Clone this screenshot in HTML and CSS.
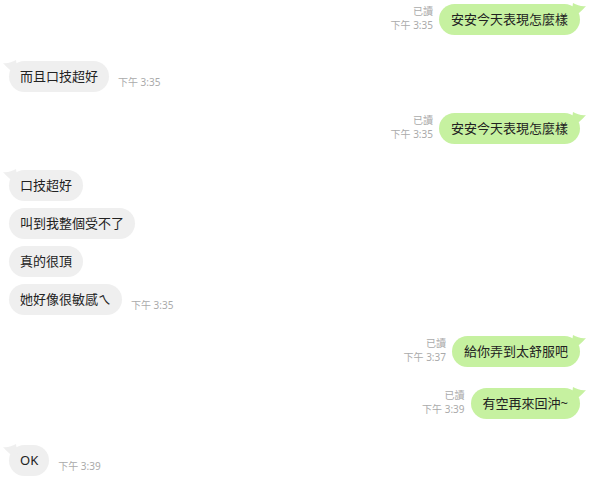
FILE: index.html
```html
<!DOCTYPE html>
<html lang="zh-Hant">
<head>
    <meta charset="UTF-8">
    <meta name="viewport" content="width=device-width, initial-scale=1.0">
    <title>Chat</title>
    <link rel="stylesheet" href="styles.css">
</head>
<body>
    <div class="chat">
        <div class="row out">
            <div class="meta"><span>已讀</span><span>下午 3:35</span></div>
            <div class="bubble">安安今天表現怎麼樣
                <svg class="tail" viewBox="0 0 20 16"><path d="M1,3 C5,4 10,2 14,0 L16,14 C10,12 5,8 1,3 Z"/></svg>
            </div>
        </div>

        <div class="row in">
            <div class="bubble">而且口技超好
                <svg class="tail" viewBox="0 0 20 16"><path d="M1,3 C5,4 10,2 14,0 L16,14 C10,12 5,8 1,3 Z"/></svg>
            </div>
            <div class="meta"><span>下午 3:35</span></div>
        </div>

        <div class="row out">
            <div class="meta"><span>已讀</span><span>下午 3:35</span></div>
            <div class="bubble">安安今天表現怎麼樣
                <svg class="tail" viewBox="0 0 20 16"><path d="M1,3 C5,4 10,2 14,0 L16,14 C10,12 5,8 1,3 Z"/></svg>
            </div>
        </div>

        <div class="row in">
            <div class="bubble">口技超好
                <svg class="tail" viewBox="0 0 20 16"><path d="M1,3 C5,4 10,2 14,0 L16,14 C10,12 5,8 1,3 Z"/></svg>
            </div>
        </div>
        <div class="row in cont">
            <div class="bubble">叫到我整個受不了</div>
        </div>
        <div class="row in cont">
            <div class="bubble">真的很頂</div>
        </div>
        <div class="row in cont">
            <div class="bubble">她好像很敏感ㄟ</div>
            <div class="meta"><span>下午 3:35</span></div>
        </div>

        <div class="row out">
            <div class="meta"><span>已讀</span><span>下午 3:37</span></div>
            <div class="bubble">給你弄到太舒服吧
                <svg class="tail" viewBox="0 0 20 16"><path d="M1,3 C5,4 10,2 14,0 L16,14 C10,12 5,8 1,3 Z"/></svg>
            </div>
        </div>

        <div class="row out">
            <div class="meta"><span>已讀</span><span>下午 3:39</span></div>
            <div class="bubble">有空再來回沖~
                <svg class="tail" viewBox="0 0 20 16"><path d="M1,3 C5,4 10,2 14,0 L16,14 C10,12 5,8 1,3 Z"/></svg>
            </div>
        </div>

        <div class="row in">
            <div class="bubble">OK
                <svg class="tail" viewBox="0 0 20 16"><path d="M1,3 C5,4 10,2 14,0 L16,14 C10,12 5,8 1,3 Z"/></svg>
            </div>
            <div class="meta"><span>下午 3:39</span></div>
        </div>
    </div>
</body>
</html>
```

FILE: styles.css
```css
body {
    margin: 0;
    padding: 0;
    background-color: #fff;
    font-family: "Noto Sans", "Noto Sans CJK TC", sans-serif;
    color: #222;
}

.chat {
    display: flex;
    flex-direction: column;
    padding: 4px 12px 0 9px;
}

.row {
    display: flex;
    align-items: flex-end;
    gap: 9px;
}

.row.out {
    justify-content: flex-end;
    gap: 6px;
    margin-top: 21px;
}

.row.in {
    margin-top: 26px;
}

.row.in.cont {
    margin-top: 7px;
}

.row:first-child {
    margin-top: 0;
}

.bubble {
    position: relative;
    padding: 6px 12px;
    font-size: 13px;
    line-height: 19px;
    border-radius: 16px;
    white-space: nowrap;
}

.in .bubble {
    padding: 6px 11px;
    background-color: #efefef;
}

.out .bubble {
    background-color: #c6f1a0;
}

.tail {
    position: absolute;
    top: -1px;
    width: 20px;
    height: 16px;
}

.in .tail {
    left: -7px;
    fill: #efefef;
}

.out .tail {
    right: -7px;
    fill: #c6f1a0;
    transform: scaleX(-1);
}

.meta {
    display: flex;
    flex-direction: column;
    font-size: 10px;
    line-height: 14px;
    color: #aaa;
    padding-bottom: 3px;
    white-space: nowrap;
}

.out .meta {
    align-items: flex-end;
}
```
